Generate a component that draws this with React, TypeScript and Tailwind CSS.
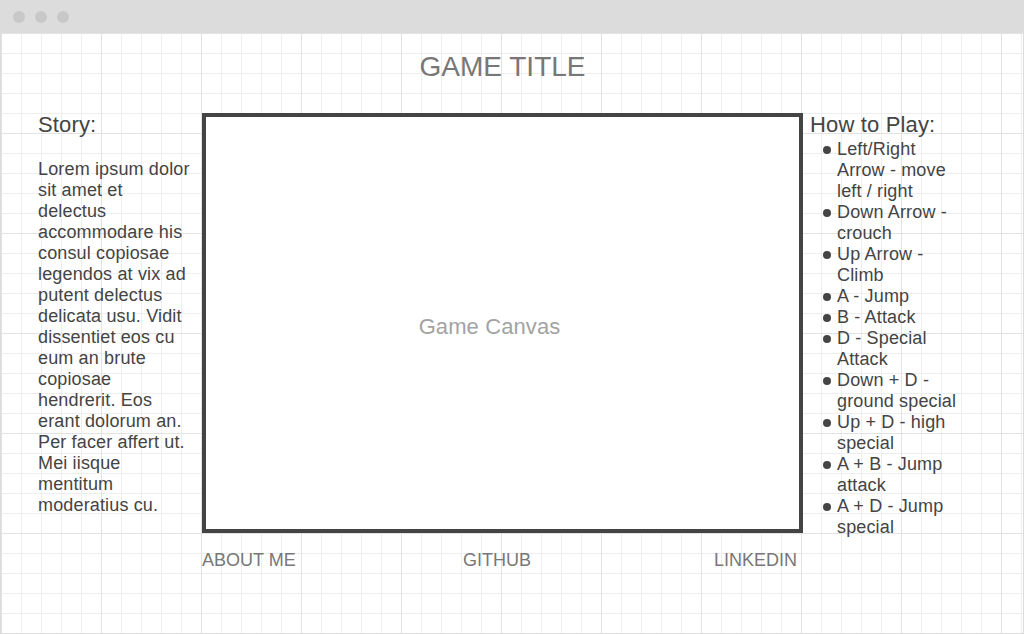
const story =
  "Lorem ipsum dolor sit amet et delectus accommodare his consul copiosae legendos at vix ad putent delectus delicata usu. Vidit dissentiet eos cu eum an brute copiosae hendrerit. Eos erant dolorum an. Per facer affert ut. Mei iisque mentitum moderatius cu.";

const controls = [
  "Left/Right Arrow - move left / right",
  "Down Arrow - crouch",
  "Up Arrow - Climb",
  "A - Jump",
  "B - Attack",
  "D - Special Attack",
  "Down + D - ground special",
  "Up + D - high special",
  "A + B - Jump attack",
  "A + D - Jump special",
];

const links = ["ABOUT ME", "GITHUB", "LINKEDIN"];

function TitleBar() {
  return (
    <div className="h-[33px] bg-[#dcdcdc] flex items-center gap-[10px] pl-[13px]">
      <span className="w-[12px] h-[12px] rounded-full bg-[#c8c8c8]" />
      <span className="w-[12px] h-[12px] rounded-full bg-[#c8c8c8]" />
      <span className="w-[12px] h-[12px] rounded-full bg-[#c8c8c8]" />
    </div>
  );
}

export default function App() {
  return (
    <div className="w-[1024px] h-[634px] flex flex-col bg-white font-['Liberation_Sans',Arial,sans-serif] overflow-hidden">
      <TitleBar />
      <div className="flex-1 border-x border-b border-[#dcdcdc] [background-image:linear-gradient(to_right,#e2e2e2_1px,transparent_1px),linear-gradient(to_bottom,#e2e2e2_1px,transparent_1px),linear-gradient(to_right,#eeeeee_1px,transparent_1px),linear-gradient(to_bottom,#eeeeee_1px,transparent_1px)] [background-size:100px_100px,100px_100px,20px_20px,20px_20px]">
        <div className="grid grid-cols-[164px_601px_160px] pl-[37px]">
          <div />
          <h1 className="mt-[18px] mb-[28px] text-center text-[28px] leading-[32px] text-[#777]">
            GAME TITLE
          </h1>
          <div />

          <div className="pt-[1px] w-[153px] tracking-[0.15px]">
            <h2 className="text-[22px] leading-[26px] text-[#444]">Story:</h2>
            <p className="mt-[21px] text-[18px] leading-[21px] text-[#444]">{story}</p>
          </div>

          <div className="mt-[2px] h-[420px] border-4 border-[#444] bg-white flex items-center justify-center pr-[26px] pt-[6px]">
            <span className="text-[22px] text-[#a3a3a3] tracking-[0.1px]">Game Canvas</span>
          </div>

          <div className="ml-[7px] pt-[1px] tracking-[0.15px]">
            <h2 className="text-[22px] leading-[26px] text-[#444]">How to Play:</h2>
            <ul className="mt-[1px] w-[152px]">
              {controls.map((c) => (
                <li key={c} className="flex text-[18px] leading-[21px] text-[#444]">
                  <span className="w-[27px] h-[21px] shrink-0 flex items-center justify-end pr-[6px]">
                    <span className="w-[8px] h-[8px] rounded-full bg-[#444]" />
                  </span>
                  <span>{c}</span>
                </li>
              ))}
            </ul>
          </div>

          <div />
          <div className="mt-[12px] grid grid-cols-3 pr-[6px] text-[18px] leading-[21px] text-[#777]">
            <a className="text-left">{links[0]}</a>
            <a className="text-center pr-[5px]">{links[1]}</a>
            <a className="text-right">{links[2]}</a>
          </div>
          <div />
        </div>
      </div>
    </div>
  );
}
